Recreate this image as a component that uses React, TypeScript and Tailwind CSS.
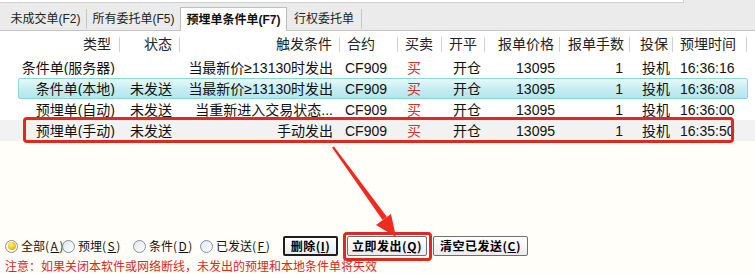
import React from "react";

type Col = { w: string; h: string; d: string; head: string };

const cols: Col[] = [
  { w: "w-[120px]", h: "text-right pr-[8px]", d: "text-right pr-[5px]", head: "类型" },
  { w: "w-[60px]", h: "text-right pr-[7px]", d: "text-left pl-[10px]", head: "状态" },
  { w: "w-[160px]", h: "text-right pr-[7px]", d: "text-right pr-[7px]", head: "触发条件" },
  { w: "w-[58px]", h: "text-left pl-[7px]", d: "text-left pl-[5px]", head: "合约" },
  { w: "w-[44px]", h: "text-left pl-[7px]", d: "text-left pl-[9px]", head: "买卖" },
  { w: "w-[43px]", h: "text-left pl-[7px]", d: "text-left pl-[11px]", head: "开平" },
  { w: "w-[75px]", h: "text-left pl-[13px]", d: "text-right pr-[5px]", head: "报单价格" },
  { w: "w-[70px]", h: "text-left pl-[8px]", d: "text-right pr-[7px]", head: "报单手数" },
  { w: "w-[43px]", h: "text-left pl-[10px]", d: "text-left pl-[12px]", head: "投保" },
  { w: "w-[74px]", h: "text-left pl-[7px]", d: "text-left pl-[7px]", head: "预埋时间" },
];

const rows = [
  ["条件单(服务器)", "", "当最新价≥13130时发出", "CF909", "买", "开仓", "13095", "1", "投机", "16:36:16"],
  ["条件单(本地)", "未发送", "当最新价≥13130时发出", "CF909", "买", "开仓", "13095", "1", "投机", "16:36:08"],
  ["预埋单(自动)", "未发送", "当重新进入交易状态...", "CF909", "买", "开仓", "13095", "1", "投机", "16:36:00"],
  ["预埋单(手动)", "未发送", "手动发出", "CF909", "买", "开仓", "13095", "1", "投机", "16:35:50"],
];

const Radio = ({ on }: { on?: boolean }) =>
  on ? (
    <span className="w-[13px] h-[13px] rounded-full border border-[#8a8a8a] bg-white flex items-center justify-center shrink-0">
      <span className="w-[8px] h-[8px] rounded-full bg-[radial-gradient(circle_at_40%_35%,#fff27a,#e8b800_70%,#b08a00)]" />
    </span>
  ) : (
    <span className="w-[13px] h-[13px] rounded-full border border-[#7d8fa8] bg-gradient-to-br from-[#e2e6ea] to-white shrink-0" />
  );

const RadioItem = ({ w, on, label, k }: { w: string; on?: boolean; label: string; k: string }) => (
  <div className={`${w} flex items-center gap-[3px]`}>
    <Radio on={on} />
    <span className="whitespace-nowrap">
      {label}
      <span className="tracking-[1.5px]">
        (<span className="underline">{k}</span>)
      </span>
    </span>
  </div>
);

export default function App() {
  return (
    <div className="relative w-[755px] h-[274px] overflow-hidden flex flex-col bg-[#fffef8] text-[#111] font-['Liberation_Sans','Noto_Sans_CJK_SC',sans-serif]">
      {/* top strip */}
      <div className="h-[4px] flex bg-[#ebebeb]">
        <div className="w-[684px] h-[3px] bg-white border-b border-r border-[#cfcfcf]" />
      </div>

      {/* tabs */}
      <div className="h-[27px] bg-[#ebebeb] flex items-end pl-[5px] border-b border-[#c4c4c4] text-[12px] leading-none">
        <div className="w-[81px] h-[22px] flex items-center justify-center text-[#222]">未成交单(F2)</div>
        <div className="w-px h-[20px] bg-[#c6c6c6] mb-[1px]" />
        <div className="w-[93px] h-[22px] flex items-center justify-center text-[#222]">所有委托单(F5)</div>
        <div className="w-[107px] h-[24px] -mb-px bg-white border-l border-r border-t border-[#bdbdbd] flex items-center justify-center font-bold">
          预埋单条件单(F7)
        </div>
        <div className="w-[74px] h-[22px] flex items-center justify-center text-[#222]">行权委托单</div>
        <div className="w-px h-[20px] bg-[#c6c6c6] mb-[1px]" />
      </div>

      {/* header */}
      <div className="h-[26px] bg-white flex items-center text-[14px] leading-none text-[#222]">
        {cols.map((c, i) => (
          <div key={i} className={`${c.w} flex items-center`}>
            <span className={`flex-1 ${c.h}`}>{c.head}</span>
            <span className="w-px h-[15px] bg-[#cfcfcf]" />
          </div>
        ))}
      </div>

      {/* rows */}
      <div className="bg-white text-[14px] leading-none">
        {rows.map((r, ri) => (
          <div key={ri} className={`relative h-[21px] flex items-center ${ri === 3 ? "bg-[#f2f2f2]" : ""}`}>
            {ri === 1 && (
              <div className="absolute left-[18px] right-[7px] top-0 bottom-0 rounded-[2px] border border-[#8fd3dd] bg-gradient-to-b from-[#e9f9fb] via-[#c4eef2] to-[#b6e6ec]" />
            )}
            {r.map((v, ci) => (
              <div
                key={ci}
                className={`relative ${cols[ci].w} ${cols[ci].d} whitespace-nowrap overflow-hidden ${ci === 4 ? "text-[#c8342c]" : ""}`}
              >
                {v}
              </div>
            ))}
          </div>
        ))}
      </div>

      <div className="flex-1" />

      {/* controls */}
      <div className="h-[22px] flex items-center pl-[5px] text-[12px] leading-none text-[#111] font-['Noto_Sans_CJK_SC',sans-serif]">
        <RadioItem w="w-[57px]" on label="全部" k="A" />
        <RadioItem w="w-[71px]" label="预埋" k="S" />
        <RadioItem w="w-[67px]" label="条件" k="D" />
        <RadioItem w="w-[83px]" label="已发送" k="F" />
        <button className="w-[55px] h-[20px] rounded-[2px] border-2 border-[#1e1e1e] bg-gradient-to-b from-white to-[#ececec] font-bold text-black flex items-center justify-center tracking-[0.5px]">
          删除(<span className="underline">I</span>)
        </button>
        <button className="ml-[9px] w-[80px] h-[20px] rounded-[2px] border border-[#6f6f6f] bg-gradient-to-b from-white to-[#ececec] font-bold text-black flex items-center justify-center tracking-[0.5px]">
          立即发出(<span className="underline">Q</span>)
        </button>
        <button className="ml-[6px] w-[95px] h-[20px] rounded-[2px] border border-[#6f6f6f] bg-gradient-to-b from-white to-[#ececec] font-bold text-black flex items-center justify-center tracking-[0.5px]">
          清空已发送(<span className="underline">C</span>)
        </button>
      </div>

      {/* notice */}
      <div className="h-[17px] pl-[5px] flex items-center text-[12px] leading-none text-[#d42a22] font-['Noto_Sans_CJK_SC',sans-serif]">
        注意：如果关闭本软件或网络断线，未发出的预埋和本地条件单将失效
      </div>

      {/* annotations */}
      <div className="absolute left-[23px] top-[117px] w-[711px] h-[26px] rounded-[4px] border-[3px] border-[#e0281f] pointer-events-none" />
      <div className="absolute left-[343px] top-[232px] w-[89px] h-[29px] rounded-[4px] border-[3px] border-[#e0281f] pointer-events-none" />
      <svg className="absolute left-0 top-0 pointer-events-none" width="755" height="274" viewBox="0 0 755 274">
        <polygon points="332,147.5 334,146.5 387,217 382.5,220" fill="#ef2a1e" />
        <polygon points="396,237 376,225 391,214" fill="#ef2a1e" />
      </svg>
    </div>
  );
}
